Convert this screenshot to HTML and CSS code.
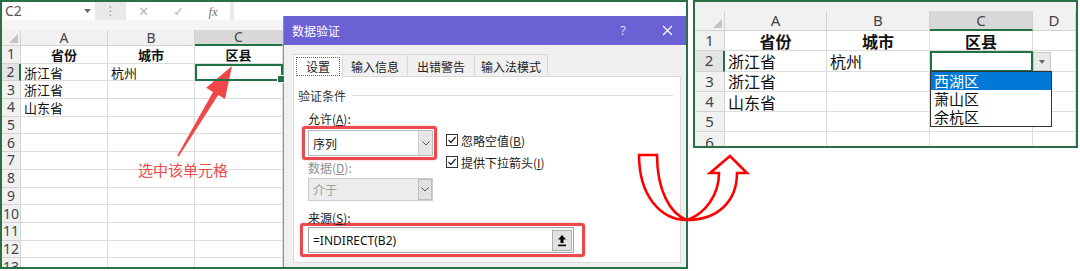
FILE: index.html
```html
<!DOCTYPE html>
<html lang="zh-CN">
<head>
    <meta charset="UTF-8">
    <title>数据验证 - 二级下拉菜单</title>
    <link rel="stylesheet" href="styles.css">
</head>
<body>
<div class="stage">
    <!-- left: sheet + data validation dialog -->
    <div class="sheet sheet-left">
        <div class="fbar">
            <div class="namebox"><span>C2</span><svg width="7" height="4" viewBox="0 0 7 4"><path d="M0 0h7L3.5 4z" fill="#666"/></svg></div>
            <div class="fbar-dots">⋮</div>
            <div class="fbar-btns"><span>✕</span><span>✓</span><span class="fx">fx</span></div>
            <div class="fbar-input"></div>
        </div>
        <div class="band"></div>
        <div class="grid grid-left">
            <div class="cell hd corner"></div><div class="cell hd">A</div><div class="cell hd">B</div><div class="cell hd on">C</div>
            <div class="cell hd rh">1</div><div class="cell b">省份</div><div class="cell b">城市</div><div class="cell b">区县</div>
            <div class="cell hd rh on">2</div><div class="cell">浙江省</div><div class="cell">杭州</div><div class="cell sel"></div>
            <div class="cell hd rh">3</div><div class="cell">浙江省</div><div class="cell"></div><div class="cell"></div>
            <div class="cell hd rh">4</div><div class="cell">山东省</div><div class="cell"></div><div class="cell"></div>
            <div class="cell hd rh">5</div><div class="cell"></div><div class="cell"></div><div class="cell"></div>
            <div class="cell hd rh">6</div><div class="cell"></div><div class="cell"></div><div class="cell"></div>
            <div class="cell hd rh">7</div><div class="cell"></div><div class="cell"></div><div class="cell"></div>
            <div class="cell hd rh">8</div><div class="cell"></div><div class="cell"></div><div class="cell"></div>
            <div class="cell hd rh">9</div><div class="cell"></div><div class="cell"></div><div class="cell"></div>
            <div class="cell hd rh">10</div><div class="cell"></div><div class="cell"></div><div class="cell"></div>
            <div class="cell hd rh">11</div><div class="cell"></div><div class="cell"></div><div class="cell"></div>
            <div class="cell hd rh">12</div><div class="cell"></div><div class="cell"></div><div class="cell"></div>
            <div class="cell hd rh">13</div><div class="cell"></div><div class="cell"></div><div class="cell"></div>
        </div>

        <div class="dialog">
            <div class="dlg-title">
                <span>数据验证</span>
                <span class="dlg-help">?</span>
                <span class="dlg-close"><svg width="11" height="11" viewBox="0 0 11 11"><path d="M1 1l9 9M10 1l-9 9" stroke="#fff" stroke-width="1.2"/></svg></span>
            </div>
            <div class="dlg-body">
                <div class="tabs">
                    <div class="tab active"><span class="focus">设置</span></div>
                    <div class="tab">输入信息</div>
                    <div class="tab">出错警告</div>
                    <div class="tab">输入法模式</div>
                </div>
                <div class="tab-panel">
                    <div class="group-title"><span>验证条件</span><i class="rule"></i></div>
                    <div class="lbl">允许(<u>A</u>):</div>
                    <div class="allow-row">
                        <div class="mark">
                            <div class="combo"><span>序列</span><b class="combo-btn"><svg width="8" height="5" viewBox="0 0 8 5"><path d="M0.5 0.5l3.5 3.5 3.5-3.5" fill="none" stroke="#555"/></svg></b></div>
                        </div>
                        <div class="checks">
                            <div class="chk"><i class="box"><svg width="10" height="10" viewBox="0 0 10 10"><path d="M1.5 5l2.5 2.5 4.5-5.5" fill="none" stroke="#222" stroke-width="1.2"/></svg></i>忽略空值(<u>B</u>)</div>
                            <div class="chk"><i class="box"><svg width="10" height="10" viewBox="0 0 10 10"><path d="M1.5 5l2.5 2.5 4.5-5.5" fill="none" stroke="#222" stroke-width="1.2"/></svg></i>提供下拉箭头(<u>I</u>)</div>
                        </div>
                    </div>
                    <div class="lbl dim">数据(<u>D</u>):</div>
                    <div class="combo disabled"><span>介于</span><b class="combo-btn"><svg width="8" height="5" viewBox="0 0 8 5"><path d="M0.5 0.5l3.5 3.5 3.5-3.5" fill="none" stroke="#555"/></svg></b></div>
                    <div class="lbl">来源(<u>S</u>):</div>
                    <div class="mark mark-src">
                        <div class="src-input"><span>=INDIRECT(B2)</span><b class="collapse"><svg width="10" height="13" viewBox="0 0 10 13"><path d="M5 1l4 4.5H6.5V9h-3V5.5H1z" fill="#000"/><rect x="1" y="10.6" width="8" height="1.6" fill="#000"/></svg></b></div>
                    </div>
                </div>
            </div>
        </div>
    </div>

    <!-- right: result with dropdown -->
    <div class="sheet sheet-right">
        <div class="band band-r"></div>
        <div class="grid grid-right">
            <div class="cell hd corner"></div><div class="cell hd">A</div><div class="cell hd">B</div><div class="cell hd on">C</div><div class="cell hd">D</div>
            <div class="cell hd rh">1</div><div class="cell b">省份</div><div class="cell b">城市</div><div class="cell b">区县</div><div class="cell"></div>
            <div class="cell hd rh on">2</div><div class="cell">浙江省</div><div class="cell">杭州</div>
            <div class="cell sel">
                <b class="dd-btn"><svg width="6" height="4" viewBox="0 0 6 4"><path d="M0 0h6L3 4z" fill="#666"/></svg></b>
                <div class="dd-list">
                    <div class="dd-item hot">西湖区</div>
                    <div class="dd-item">萧山区</div>
                    <div class="dd-item">余杭区</div>
                </div>
            </div>
            <div class="cell"></div>
            <div class="cell hd rh">3</div><div class="cell">浙江省</div><div class="cell"></div><div class="cell"></div><div class="cell"></div>
            <div class="cell hd rh">4</div><div class="cell">山东省</div><div class="cell"></div><div class="cell"></div><div class="cell"></div>
            <div class="cell hd rh">5</div><div class="cell"></div><div class="cell"></div><div class="cell"></div><div class="cell"></div>
            <div class="cell hd rh">6</div><div class="cell"></div><div class="cell"></div><div class="cell"></div><div class="cell"></div>
        </div>
    </div>

    <!-- annotations -->
    <svg class="overlay" width="1080" height="271" viewBox="0 0 1080 271">
        <path d="M232 66L225 99.1 218.2 95 178.7 156.4 177.3 155.6 213 91.9 206.2 87.7z" fill="#f04848"/>
        <path d="M639 155H657C657 190 670 214 687 220C705 214 719 195 719 173H710L730 156 747 173H737C737 201 718 220 687 220C660 220 639 195 639 155z" fill="#fff" stroke="#ff0000" stroke-width="2.6" stroke-linejoin="miter"/>
    </svg>
    <div class="pointer-label">选中该单元格</div>
</div>
</body>
</html>
```

FILE: styles.css
```css
* {
    box-sizing: border-box;
}
body {
    margin: 0;
    background: #fff;
    font-family: "Noto Sans", "Noto Sans CJK SC", sans-serif;
}
.stage {
    position: relative;
    display: flex;
    align-items: flex-start;
    width: 1080px;
    height: 271px;
    overflow: hidden;
}
.sheet {
    position: relative;
    border: 2px solid #2a6f45;
    background: #fff;
    overflow: hidden;
}
.sheet-left {
    width: 688px;
    height: 269px;
}
.sheet-right {
    width: 385px;
    height: 148px;
    margin-left: 5px;
}

/* formula bar */
.fbar {
    display: flex;
    height: 18px;
    background: #e9e9e9;
}
.namebox {
    width: 93px;
    background: #fff;
    display: flex;
    align-items: center;
    justify-content: space-between;
    padding: 0 4px 0 3px;
    font-size: 14px;
    line-height: 1;
    color: #555;
}
.fbar-dots {
    width: 31px;
    text-align: center;
    color: #9a9a9a;
    font-family: "DejaVu Sans", sans-serif;
    font-size: 12px;
    line-height: 18px;
}
.fbar-btns {
    width: 104px;
    background: #fff;
    display: flex;
    align-items: center;
    justify-content: space-around;
    color: #b8b8b8;
    font-family: "DejaVu Sans", sans-serif;
    font-size: 13px;
    line-height: 1;
}
.fbar-btns .fx {
    font-family: "Liberation Serif", serif;
    font-style: italic;
    color: #777;
}
.fbar-input {
    flex: 1;
    margin-left: 4px;
    background: #fff;
}
.band {
    height: 10px;
    background: #f5f5f5;
}
.band-r {
    height: 9px;
    background: #f1f1f1;
}

/* grid */
.grid {
    display: grid;
}
.grid-left {
    grid-template-columns: 19px 87px 87px 88px;
    grid-template-rows: 16px;
    grid-auto-rows: 17.7px;
    font-size: 13px;
}
.grid-right {
    grid-template-columns: 30px 102px 103px 103px 1fr;
    grid-template-rows: 20px;
    grid-auto-rows: 20.3px;
    font-size: 16px;
}
.cell {
    display: flex;
    align-items: center;
    padding: 0 3px;
    line-height: 1;
    white-space: nowrap;
    border-right: 1px solid #dcdcdc;
    border-bottom: 1px solid #dcdcdc;
    font-family: "Noto Sans CJK SC", sans-serif;
    color: #111;
}
.hd {
    justify-content: center;
    padding: 0;
    background: #f1f1f1;
    border-color: #d2d2d2;
    font-family: "Noto Sans", sans-serif;
    color: #444;
}
.grid-left .hd {
    font-size: 14px;
}
.grid-right .hd {
    font-size: 15px;
}
.hd.on {
    background: #d8d8d8;
    border-bottom: 2px solid #217346;
}
.rh.on {
    background: #e4e4e4;
    border-bottom: 1px solid #d2d2d2;
    border-right: 2px solid #217346;
}
.corner {
    position: relative;
}
.corner::after {
    content: "";
    position: absolute;
    right: 2px;
    bottom: 2px;
    border-left: 9px solid transparent;
    border-bottom: 9px solid #c4c4c4;
}
.b {
    justify-content: center;
    font-weight: bold;
}
.sel {
    position: relative;
    z-index: 2;
    outline: 2px solid #217346;
    outline-offset: -2px;
}
.sel::after {
    content: "";
    position: absolute;
    right: -3px;
    bottom: -3px;
    width: 6px;
    height: 6px;
    background: #217346;
    border: 1px solid #fff;
}
.sheet-right .sel::after {
    display: none;
}

/* dropdown on the right sheet */
.dd-btn {
    position: absolute;
    left: calc(100% + 1px);
    top: 1px;
    width: 18px;
    height: 19px;
    background: #e9e9e9;
    border: 1px solid #c9c9c9;
    display: flex;
    align-items: center;
    justify-content: center;
}
.dd-list {
    position: absolute;
    top: 100%;
    left: 0;
    width: 122px;
    border: 1px solid #333;
    background: #fff;
    font-size: 15px;
}
.dd-item {
    height: 18px;
    line-height: 18px;
    padding-left: 3px;
    color: #111;
}
.dd-item.hot {
    background: #0078d7;
    color: #fff;
}

/* dialog */
.dialog {
    position: absolute;
    left: 281px;
    top: 14px;
    right: 0;
    bottom: 0;
    display: flex;
    flex-direction: column;
    background: #f0f0f0;
    border-left: 1px solid #8f88d6;
    font-family: "Noto Sans CJK SC", sans-serif;
    font-size: 12px;
    color: #222;
}
.dlg-title {
    height: 29px;
    display: flex;
    align-items: center;
    padding: 0 7px 0 8px;
    background: #6b60d4;
    color: #fff;
}
.dlg-help {
    margin-left: auto;
    width: 24px;
    text-align: center;
    font-family: "Noto Sans", sans-serif;
    color: #e4e1f7;
}
.dlg-close {
    width: 24px;
    margin-left: 20px;
    display: flex;
    justify-content: center;
}
.dlg-body {
    flex: 1;
    display: flex;
    flex-direction: column;
    padding: 9px 5px 4px 9px;
}
.tabs {
    display: flex;
    height: 23px;
}
.tab {
    display: flex;
    align-items: center;
    justify-content: center;
    white-space: nowrap;
    border: 1px solid #d9d9d9;
    border-bottom: none;
    margin-right: -1px;
    background: #f0f0f0;
}
.tab:nth-child(1) { width: 50px; }
.tab:nth-child(2) { width: 66px; }
.tab:nth-child(3) { width: 68px; }
.tab:nth-child(4) { width: 74px; }
.tab.active {
    position: relative;
    z-index: 1;
    background: #fff;
    padding: 2px;
    height: 24px;
}
.tab .focus {
    width: 100%;
    height: 100%;
    display: flex;
    align-items: center;
    justify-content: center;
    border: 1px dotted #666;
}
.tab-panel {
    flex: 1;
    margin-top: -1px;
    background: #fff;
    border: 1px solid #d9d9d9;
}
.group-title {
    display: flex;
    align-items: center;
    height: 14px;
    margin: 11px 7px 0 4px;
    color: #333;
}
.rule {
    flex: 1;
    height: 1px;
    margin-left: 6px;
    background: #dcdcdc;
}
.lbl {
    margin: 10px 0 0 14px;
    line-height: 14px;
    height: 14px;
}
.lbl.dim {
    margin-top: 1px;
    color: #8f8f8f;
}
.allow-row {
    display: flex;
    height: 34px;
    margin-left: 8px;
}
.mark {
    width: 135px;
    height: 34px;
    padding: 1px 1px 1px 3px;
    border: 3px solid #ea4a4d;
    border-radius: 3px;
    box-shadow: 0 0 2px rgba(234, 74, 77, 0.5);
}
.combo {
    width: 125px;
    height: 26px;
    display: flex;
    align-items: center;
    padding-left: 4px;
    background: #fff;
    border: 1px solid #b9b9b9;
}
.combo-btn {
    margin-left: auto;
    width: 14px;
    height: 100%;
    display: flex;
    align-items: center;
    justify-content: center;
    background: #e6e6e6;
    border-left: 1px solid #cfcfcf;
}
.combo.disabled {
    height: 23px;
    margin: 3px 0 0 14px;
    background: #ececec;
    border-color: #cdcdcd;
    color: #9c9c9c;
}
.combo.disabled .combo-btn {
    background: #e2e2e2;
    border: 1px solid #bdbdbd;
}
.checks {
    margin-left: 9px;
    padding-top: 3px;
}
.chk {
    display: flex;
    align-items: center;
    height: 22px;
    white-space: nowrap;
}
.box {
    width: 12px;
    height: 12px;
    margin-right: 3px;
    border: 1px solid #333;
    background: #fff;
    display: flex;
    align-items: center;
    justify-content: center;
}
.mark-src {
    width: 285px;
    margin: -2px 0 0 6px;
    padding: 1px 8px 1px 5px;
}
.src-input {
    height: 26px;
    display: flex;
    align-items: center;
    padding-left: 4px;
    background: #fff;
    border: 1px solid #a3a3a3;
    font-family: "Noto Sans", sans-serif;
    font-size: 12px;
    color: #111;
}
.collapse {
    margin-left: auto;
    margin-right: 1px;
    width: 20px;
    height: 21px;
    display: flex;
    align-items: center;
    justify-content: center;
    background: #e1e1e1;
    border: 1px solid #adadad;
}

/* annotations */
.overlay {
    position: absolute;
    left: 0;
    top: 0;
    pointer-events: none;
}
.pointer-label {
    position: absolute;
    left: 138px;
    top: 160px;
    line-height: 20px;
    font-family: "Noto Sans CJK SC", sans-serif;
    font-size: 15px;
    color: #ef4a4a;
}
```
